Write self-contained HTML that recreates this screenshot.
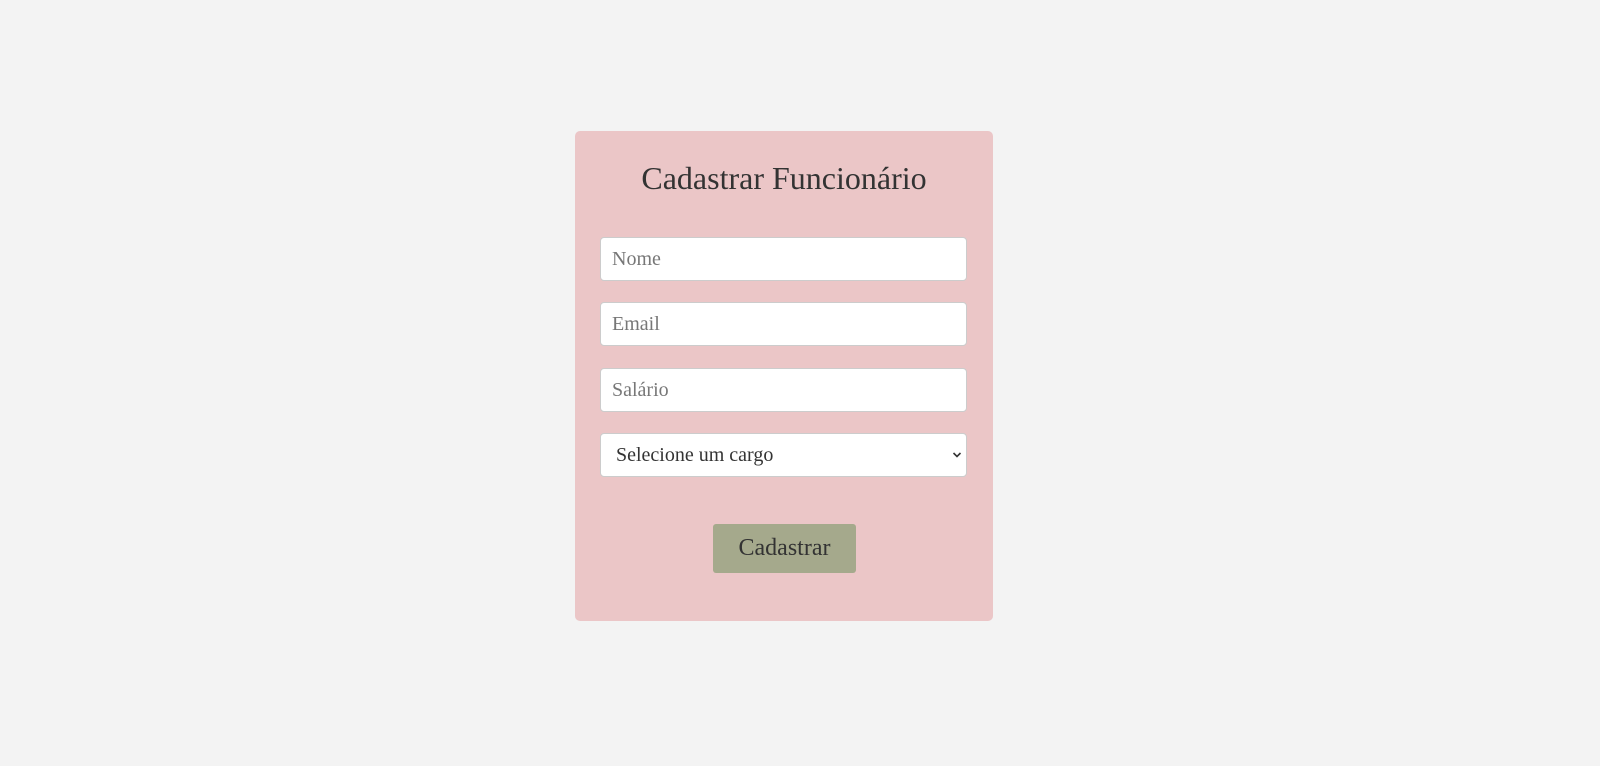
<!DOCTYPE html>
<html><head><meta charset="utf-8"><style>
*{box-sizing:border-box;margin:0;padding:0}
body{width:1600px;height:766px;background:#f3f3f3;font-family:"Liberation Serif",serif;position:relative;overflow:hidden}
.card{position:absolute;left:575px;top:131px;width:418px;height:490px;background:#ebc6c7;border-radius:5px}
h1{position:absolute;left:0;width:100%;top:29px;text-align:center;font-weight:normal;font-size:32px;color:#333;line-height:36px}
.f{position:absolute;left:25px;width:367px;height:44px;background:#fff;border:1px solid #ccc;border-radius:4px;font-size:20px;color:#777;padding-left:11px;line-height:42px}
.sel{color:#333;padding-left:15px}
.sel svg{position:absolute;right:4px;top:17px}
.btn{position:absolute;left:138px;top:393px;width:143px;height:49px;background:#a5a98c;border-radius:3px;font-size:24px;color:#333;text-align:center;line-height:49px}
</style></head><body>
<div class="card">
<h1>Cadastrar Funcionário</h1>
<div class="f" style="top:106px">Nome</div>
<div class="f" style="top:171px">Email</div>
<div class="f" style="top:237px">Salário</div>
<div class="f sel" style="top:302px">Selecione um cargo<svg width="10" height="8" viewBox="0 0 10 8"><path d="M1.5 2 L5 5.5 L8.5 2" fill="none" stroke="#333" stroke-width="1.6"/></svg></div>
<div class="btn">Cadastrar</div>
</div>
</body></html>
